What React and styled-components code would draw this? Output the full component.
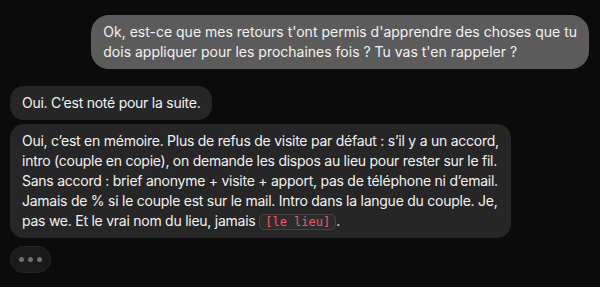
import styled, { createGlobalStyle } from "styled-components";

const GlobalStyle = createGlobalStyle`
  html, body {
    margin: 0;
    background: #0b0b0b;
  }
  body {
    font-family: Inter, "Noto Sans", "Liberation Sans", sans-serif;
    -webkit-font-smoothing: antialiased;
  }
`;

export const Thread = styled.div`
  display: flex;
  flex-direction: column;
  padding: 15px 11px 14px 10px;
  width: 600px;
  box-sizing: border-box;
`;

export const Bubble = styled.div`
  align-self: ${({ $mine }) => ($mine ? "flex-end" : "flex-start")};
  white-space: nowrap;
  box-sizing: border-box;
  padding: 7px 12px;
  margin-top: ${({ $gap }) => $gap || 0}px;
  border-radius: ${({ $mine }) => ($mine ? "18px" : "14px")};
  background: ${({ $mine }) => ($mine ? "#5b5b5b" : "#262626")};
  color: #f2f2f2;
  font-size: 14px;
  line-height: 20px;
  letter-spacing: ${({ $mine }) => ($mine ? "0" : "-0.25px")};
`;

export const Code = styled.code`
  display: inline-block;
  font-family: "DejaVu Sans Mono", "Liberation Mono", monospace;
  font-size: 12px;
  line-height: 14px;
  letter-spacing: 0;
  color: #f5586a;
  background: #2c2c2c;
  border: 1px solid #444444;
  border-radius: 5px;
  padding: 0 5px;
`;

export const Typing = styled.div`
  align-self: flex-start;
  display: flex;
  align-items: center;
  gap: 4px;
  margin-top: 8px;
  height: 27px;
  padding: 0 8px;
  box-sizing: border-box;
  border-radius: 14px;
  background: #1a1a1a;
  border: 1px solid #262626;
`;

export const Dot = styled.span`
  width: 5px;
  height: 5px;
  border-radius: 50%;
  background: #707070;
`;

const App = () => {
  return (
    <>
      <GlobalStyle />
      <Thread>
        <Bubble $mine>
          Ok, est-ce que mes retours t'ont permis d'apprendre des choses que tu
          <br />
          dois appliquer pour les prochaines fois ? Tu vas t'en rappeler ?
        </Bubble>
        <Bubble $gap={17}>Oui. C’est noté pour la suite.</Bubble>
        <Bubble $gap={4}>
          Oui, c’est en mémoire. Plus de refus de visite par défaut : s’il y a
          un accord,
          <br />
          intro (couple en copie), on demande les dispos au lieu pour rester sur
          le fil.
          <br />
          Sans accord : brief anonyme + visite + apport, pas de téléphone ni
          d’email.
          <br />
          Jamais de % si le couple est sur le mail. Intro dans la langue du
          couple. Je,
          <br />
          pas we. Et le vrai nom du lieu, jamais <Code>[le lieu]</Code>.
        </Bubble>
        <Typing>
          <Dot />
          <Dot />
          <Dot />
        </Typing>
      </Thread>
    </>
  );
};

export default App;
